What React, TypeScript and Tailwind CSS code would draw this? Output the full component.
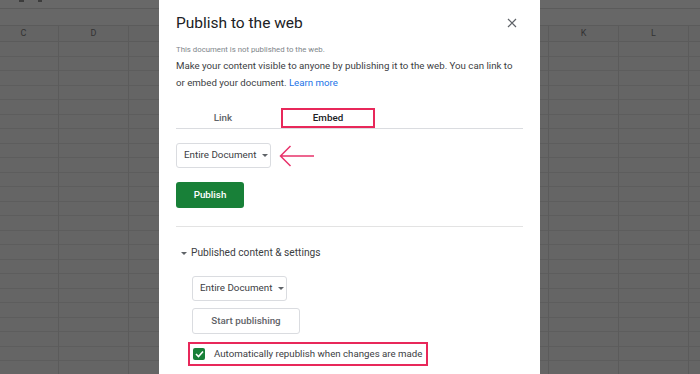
import React from 'react';

const columns = ['C', 'D', 'E', 'F', 'G', 'H', 'I', 'J', 'K', 'L', ''];
const rowCount = 24;

// Dimmed spreadsheet behind the dialog
const SheetBackdrop = () => (
  <div className="flex flex-col">
    <div className="h-[9px] border-b border-[#5b5b5b] bg-[#686868] flex items-start gap-[14px] pl-[19px]">
      <span className="w-[5px] h-[2px] bg-[#3c3c3c]" />
      <span className="w-[4px] h-[2px] bg-[#3c3c3c]" />
    </div>
    <div className="h-[17px] border-b border-[#5b5b5b] bg-[#676767]" />
    <div className="flex ml-[-11px]">
      {columns.map((col, c) => (
        <div key={c} className="w-[70px] shrink-0 border-r border-[#5b5b5b]">
          <div className="h-[16px] border-b border-[#5b5b5b] bg-[#646464] flex items-center justify-center text-[9px] text-[#333] leading-none">
            {col}
          </div>
          {Array.from({ length: rowCount }).map((_, i) => (
            <div key={i} className="h-[14.5px] border-b border-[#5d5d5d]" />
          ))}
        </div>
      ))}
    </div>
  </div>
);

const Caret = () => (
  <svg width="6" height="3" viewBox="0 0 6 3" className="ml-[6px] shrink-0">
    <path d="M0 0 L6 0 L3 3 Z" fill="#5f6368" />
  </svg>
);

const Dropdown = () => (
  <div className="w-[95px] h-[25px] border border-[#dadce0] rounded-[3px] flex items-center pl-[7px] whitespace-nowrap text-[9.8px] text-[#3c4043]">
    Entire Document
    <Caret />
  </div>
);

const PublishDialog = () => (
  <div className="absolute top-0 left-[159px] w-[381px] h-[374px] bg-white px-[17px] font-['Roboto',sans-serif]">
    <div className="flex items-center justify-between pt-[13px]">
      <h2 className="text-[15.5px] leading-[20px] text-[#202124]">Publish to the web</h2>
      <svg width="10" height="10" viewBox="0 0 10 10" className="mr-[6px]">
        <path d="M1 1 L9 9 M9 1 L1 9" stroke="#5f6368" strokeWidth="1.2" />
      </svg>
    </div>

    <p className="mt-[11px] text-[7.8px] leading-[12px] text-[#80868b]">
      This document is not published to the web.
    </p>
    <p className="mt-[1px] text-[9.7px] leading-[17px] text-[#3c4043]">
      Make your content visible to anyone by publishing it to the web. You can link to or embed your document.{' '}
      <span className="text-[#1a73e8]">Learn more</span>
    </p>

    {/* tabs */}
    <div className="mt-[17px] flex border-b border-[#dadce0] h-[21px]">
      <div className="w-[94px] flex items-center justify-center text-[9.8px] font-medium text-[#5f6368]">
        Link
      </div>
      <div className="ml-[11px] w-[94px] border-2 border-[#e8285a] flex items-center justify-center text-[9.8px] font-medium text-[#202124]">
        Embed
      </div>
    </div>

    <div className="mt-[14px] flex items-center">
      <Dropdown />
      <svg width="36" height="22" viewBox="0 0 36 22" className="ml-[8px]">
        <path d="M1.5 11 L35 11 M11.5 1 L1.5 11 L11.5 21" stroke="#e8336b" strokeWidth="1.5" fill="none" />
      </svg>
    </div>

    <button className="mt-[14px] w-[68px] h-[26px] rounded-[3px] bg-[#188038] text-white text-[9.8px] font-medium">
      Publish
    </button>

    <div className="mt-[18px] border-t border-[#e3e3e3]" />

    <div className="mt-[19px] flex items-center text-[10.2px] text-[#3c4043] leading-[14px]">
      <svg width="6" height="3" viewBox="0 0 6 3" className="ml-[5px] mr-[4px]">
        <path d="M0 0 L6 0 L3 3 Z" fill="#5f6368" />
      </svg>
      Published content &amp; settings
    </div>

    <div className="pl-[16px] mt-[16px] flex flex-col items-start">
      <Dropdown />
      <button className="mt-[7px] w-[108px] h-[26px] border border-[#dadce0] rounded-[3px] bg-white text-[9.8px] font-medium text-[#5f6368]">
        Start publishing
      </button>
    </div>

    <div className="mt-[8px] ml-[12px] w-[240px] h-[24px] border-2 border-[#e8285a] flex items-center pl-[3px]">
      <span className="w-[12px] h-[12px] shrink-0 rounded-[2px] bg-[#188038] flex items-center justify-center">
        <svg width="9" height="8" viewBox="0 0 9 8">
          <path d="M1 4 L3.5 6.5 L8 1.5" stroke="white" strokeWidth="1.6" fill="none" />
        </svg>
      </span>
      <span className="ml-[9px] whitespace-nowrap text-[9.7px] text-[#3c4043]">
        Automatically republish when changes are made
      </span>
    </div>
  </div>
);

export default function App() {
  return (
    <div className="relative w-[700px] h-[374px] overflow-hidden bg-[#656565] font-['Roboto',sans-serif]">
      <SheetBackdrop />
      <PublishDialog />
    </div>
  );
}
